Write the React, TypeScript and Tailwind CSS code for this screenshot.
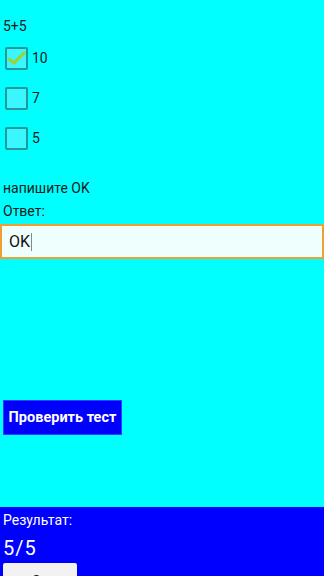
import React from "react";

function Box({ checked }: { checked?: boolean }) {
  return (
    <div className="w-[23px] h-[23px] border-2 border-[#1f9a9a] bg-[#3af7ff] rounded-[2px] flex items-center justify-center shrink-0">
      {checked && (
        <svg width="19" height="16" viewBox="0 0 19 16">
          <path d="M2 9 L7 13 L17 3" fill="none" stroke="#9bd43a" strokeWidth="3.2" strokeLinecap="round" strokeLinejoin="round" />
        </svg>
      )}
    </div>
  );
}

function Row({ label, checked }: { label: string; checked?: boolean }) {
  return (
    <div className="h-[40px] flex items-center gap-[4px] pl-[2px]">
      <Box checked={checked} />
      <span className="text-[14px] text-[#1a1a1a]">{label}</span>
    </div>
  );
}

export default function App() {
  return (
    <div
      className="w-[324px] h-[576px] overflow-hidden bg-[#00ffff] flex flex-col"
      style={{ fontFamily: "Roboto, 'Noto Sans', sans-serif" }}
    >
      <div className="flex flex-col flex-1">
        <div className="pl-[3px] flex flex-col">
          <div className="pt-[18px] h-[38px] text-[14px] leading-[17px] text-[#1a1a1a]">5+5</div>
          <Row label="10" checked />
          <Row label="7" />
          <Row label="5" />
          <div className="mt-[22px] text-[14px] leading-[17px] text-[#1a1a1a]">напишите OK</div>
          <div className="mt-[6px] text-[14px] leading-[17px] text-[#1a1a1a]">Ответ:</div>
        </div>
        <div className="mt-[4px] h-[35px] border-2 border-[#f0a030] bg-[#effffd] flex items-center pl-[7px]">
          <span className="text-[16px] text-[#111]">OK</span>
          <span className="w-[1px] h-[18px] bg-[#888] ml-[1px]" />
        </div>
        <div className="mt-[141px] pl-[3px]">
          <div className="w-[119px] h-[35px] bg-[#0000ff] border border-[#3a3aff] flex items-center justify-center text-white font-bold text-[14.5px]">
            Проверить тест
          </div>
        </div>
      </div>
      <div className="h-[69px] bg-[#0000ff] flex flex-col pl-[3px] shrink-0">
        <div className="mt-[5px] text-white text-[14px] leading-[17px]">Результат:</div>
        <div className="mt-[7px] text-white text-[20px] leading-[24px] tracking-[1px]">5/5</div>
        <div className="mt-[3px] w-[74px] h-[20px] bg-[#f2f2f2] rounded-t-[2px] flex justify-center pt-[10px] text-[#222] text-[14px] leading-[17px]">
          Ок
        </div>
      </div>
    </div>
  );
}
